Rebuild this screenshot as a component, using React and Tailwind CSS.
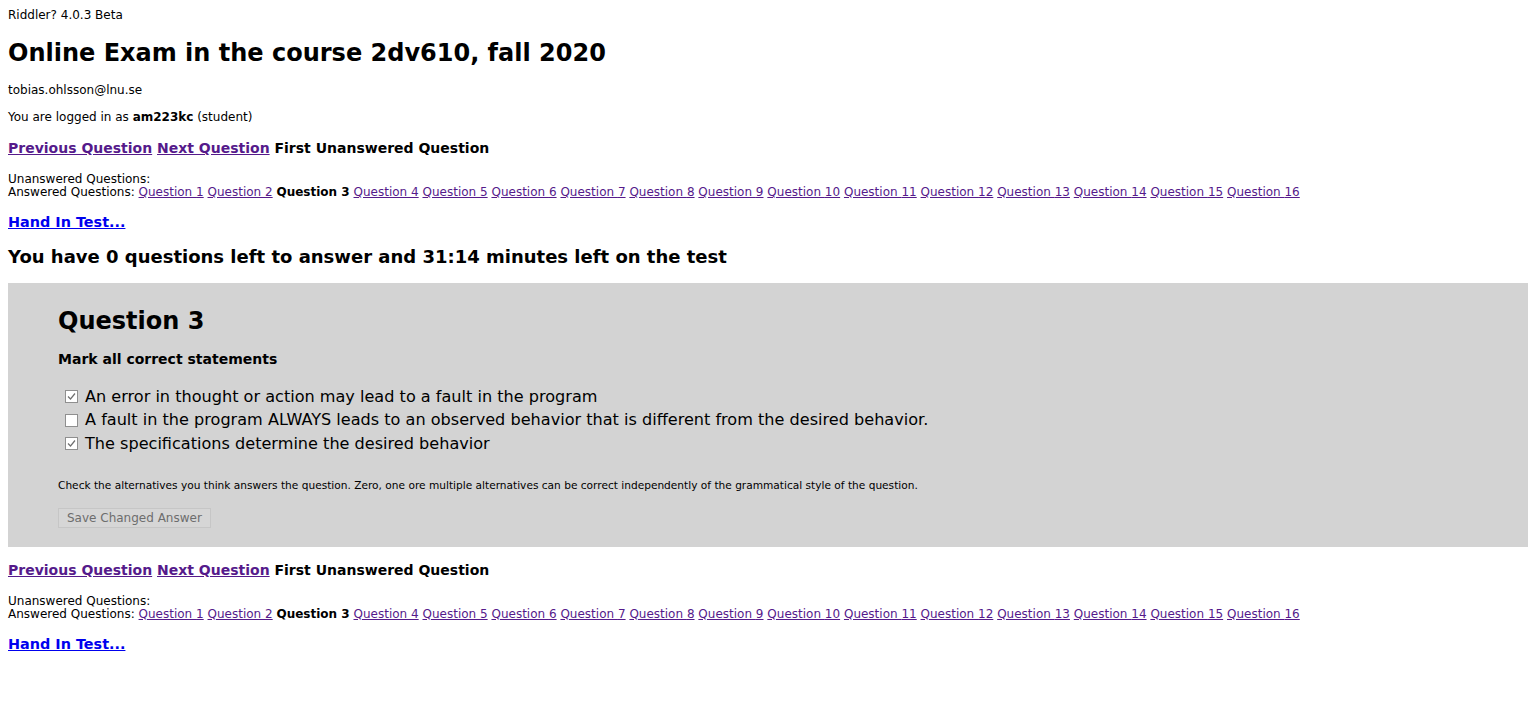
import React from 'react';

const questions = Array.from({ length: 16 }, (_, i) => i + 1);

const Nav = () => (
  <div className="text-[14px] leading-[18px] font-bold">
    <a href="#" className="underline text-[#551a8b]">Previous Question</a>{' '}
    <a href="#" className="underline text-[#551a8b]">Next Question</a>{' '}
    <span>First Unanswered Question</span>
  </div>
);

const QuestionList = () => (
  <div className="text-[12px] leading-[13px]">
    <div>Unanswered Questions:</div>
    <div>
      Answered Questions:{' '}
      {questions.map((n) =>
        n === 3 ? (
          <React.Fragment key={n}>
            <b>Question {n}</b>{' '}
          </React.Fragment>
        ) : (
          <React.Fragment key={n}>
            <a href="#" className="underline text-[#551a8b]">Question {n}</a>{' '}
          </React.Fragment>
        )
      )}
    </div>
  </div>
);

const HandIn = () => (
  <div className="text-[14.4px] leading-[18px] font-bold">
    <a href="#" className="underline text-[#0000ee]">Hand In Test...</a>
  </div>
);

const Check = ({ checked }) => (
  <span className="inline-flex items-center justify-center w-[13px] h-[13px] border border-[#8f8f8f] bg-white mr-[7px] shrink-0">
    {checked && (
      <svg width="9" height="9" viewBox="0 0 9 9">
        <path d="M1 4.5 L3.5 7 L8 1.5" fill="none" stroke="#6f6f6f" strokeWidth="1.2" />
      </svg>
    )}
  </span>
);

const options = [
  { text: 'An error in thought or action may lead to a fault in the program', checked: true },
  { text: 'A fault in the program ALWAYS leads to an observed behavior that is different from the desired behavior.', checked: false },
  { text: 'The specifications determine the desired behavior', checked: true },
];

export default function App() {
  return (
    <div className="px-2 pt-2 pb-10 text-black bg-white" style={{ fontFamily: '"DejaVu Sans", Verdana, sans-serif' }}>
      <div className="text-[12px] leading-[15px]">Riddler? 4.0.3 Beta</div>
      <h1 className="mt-[15px] text-[24px] leading-[30px] font-bold">Online Exam in the course 2dv610, fall 2020</h1>
      <div className="mt-[15px] text-[12px] leading-[15px]">tobias.ohlsson@lnu.se</div>
      <div className="mt-[12px] text-[12px] leading-[15px]">
        You are logged in as <b>am223kc</b> (student)
      </div>
      <div className="mt-[14px]"><Nav /></div>
      <div className="mt-[16px]"><QuestionList /></div>
      <div className="mt-[14px]"><HandIn /></div>
      <h2 className="mt-[15px] text-[18px] leading-[22px] font-bold">
        You have 0 questions left to answer and 31:14 minutes left on the test
      </h2>

      <div className="mt-[15px] bg-[#d3d3d3] pl-[50px] pr-4 pt-[23px] pb-[18px]">
        <h3 className="text-[24px] leading-[30px] font-bold">Question 3</h3>
        <div className="mt-[14px] text-[14px] leading-[18px] font-bold">Mark all correct statements</div>
        <div className="mt-[17px] pl-[7px]">
          {options.map((o) => (
            <label key={o.text} className="flex items-center h-[23.5px] text-[16.1px]">
              <Check checked={o.checked} />
              <span>{o.text}</span>
            </label>
          ))}
        </div>
        <div className="mt-[23px] text-[10.6px] leading-[12px]">
          Check the alternatives you think answers the question. Zero, one ore multiple alternatives can be correct independently of the grammatical style of the question.
        </div>
        <button disabled className="mt-[17px] h-[20px] px-[8px] bg-[#d6d6d6] border border-[#c6c6c6] text-[12px] text-[#6d6d6d] leading-[18px]">
          Save Changed Answer
        </button>
      </div>

      <div className="mt-[14px]"><Nav /></div>
      <div className="mt-[16px]"><QuestionList /></div>
      <div className="mt-[14px]"><HandIn /></div>
    </div>
  );
}
